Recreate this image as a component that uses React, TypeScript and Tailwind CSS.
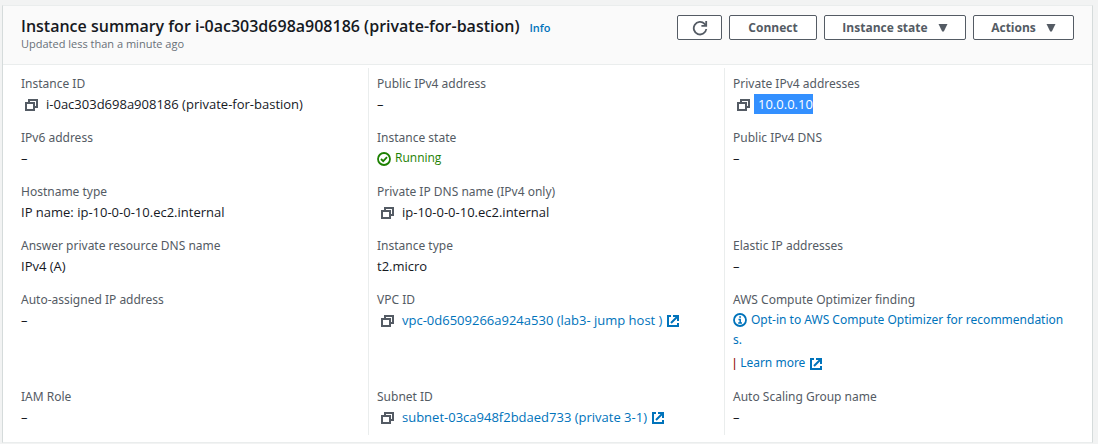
import type { ReactNode } from "react";

function CopyButton({ label }: { label: string }) {
  return (
    <button type="button" aria-label={label} className="mr-[7px] ml-1 inline-flex size-3.5 shrink-0 translate-y-px text-[#545b64]">
      <svg viewBox="0 0 14 14" className="size-3.5" fill="none" stroke="currentColor" strokeWidth="2">
        <path d="M1 5h8v7H1z" />
        <path d="M4 5V2h8v7H9" />
      </svg>
    </button>
  );
}

function ExternalIcon() {
  return (
    <svg viewBox="0 0 14 14" className="ml-1 inline-block size-3.5 shrink-0 translate-y-px" fill="none" stroke="currentColor" strokeWidth="2" aria-hidden="true">
      <path d="M5 2H2v10h10V9" />
      <path d="M7 2h5v5M12 2L5 9" />
    </svg>
  );
}

function Caret() {
  return (
    <svg viewBox="0 0 10 8" className="h-2 w-2.5" fill="currentColor" aria-hidden="true">
      <path d="M0.5 0h9L5.8 7.6H4.2z" />
    </svg>
  );
}

function Field({ label, divided = true, children = "–" }: { label: string; divided?: boolean; children?: ReactNode }) {
  return (
    <div className={divided ? "min-w-0 border-l border-[#eaeded] pt-1.5 pr-3 pb-2 pl-2" : "min-w-0 pt-1.5 pr-3 pb-2 pl-[9px]"}>
      <dt className="font-['Noto_Sans',sans-serif] text-xs leading-5 text-[#545b64]">{label}</dt>
      <dd className="text-[#16191f]">{children}</dd>
    </div>
  );
}

function CopyValue({ name, children }: { name: string; children: ReactNode }) {
  return (
    <div className="flex items-center">
      <CopyButton label={`Copy ${name}`} />
      {children}
    </div>
  );
}

const buttonClass =
  "flex h-[25px] items-center justify-center rounded-xs border border-[#545b64] bg-white text-xs font-bold text-[#545b64]";

export default function App() {
  return (
    <main className="min-h-screen bg-[#f2f3f3] pt-[5px] pr-[5px] pl-0.5 font-['Open_Sans','Noto_Sans',sans-serif] text-[13px] leading-5">
      <section className="border border-x-[#d5dbdb] border-y-[#eaeded] bg-white">
        <header className="flex items-start justify-between border-b border-[#eaeded] bg-[#fafafa] px-[18px] pt-[9px] pb-3.5">
          <div>
            <h1 className="text-base leading-[22px] font-semibold text-[#16191f]">
              Instance summary for i-0ac303d698a908186 (private-for-bastion)
              <a href="#info" className="ml-2.5 text-[11px] leading-4 font-semibold text-[#0073bb]">Info</a>
            </h1>
            <p className="text-[11px] leading-[13px] text-[#687078]">Updated less than a minute ago</p>
          </div>
          <div className="flex gap-[7px]">
            <button type="button" aria-label="Refresh" className={`${buttonClass} w-[45px]`}>
              <svg viewBox="0 0 16 16" className="size-4" fill="none" stroke="currentColor" strokeWidth="1.8">
                <path d="M14.3 9A6.3 6.3 0 1 1 12.6 3.8L14 5.3" />
                <path d="M14.2 1v4.8H9.4" />
              </svg>
            </button>
            <button type="button" className={`${buttonClass} w-22`}>Connect</button>
            <button type="button" className={`${buttonClass} w-[142px] gap-2.5`}>Instance state <Caret /></button>
            <button type="button" className={`${buttonClass} w-[101px] gap-2.5`}>Actions <Caret /></button>
          </div>
        </header>

        <dl className="grid grid-cols-3 pt-[3px] pr-3 pb-[7px] pl-[9px]">
          <Field label="Instance ID" divided={false}>
            <CopyValue name="instance ID">i-0ac303d698a908186 (private-for-bastion)</CopyValue>
          </Field>
          <Field label="Public IPv4 address" />
          <Field label="Private IPv4 addresses">
            <CopyValue name="private IPv4 address">
              <span className="-ml-1 bg-[#3390ff] pl-1 text-white">10.0.0.10</span>
            </CopyValue>
          </Field>

          <Field label="IPv6 address" divided={false} />
          <Field label="Instance state">
            <span className="flex items-center gap-1 text-xs leading-5 text-[#1d8102]">
              <svg viewBox="0 0 14 14" className="size-3.5 translate-y-px" fill="none" stroke="currentColor" strokeWidth="1.8" aria-hidden="true">
                <circle cx="7" cy="7" r="6" />
                <path d="M4 7l2.2 2.2L10 5.2" />
              </svg>
              Running
            </span>
          </Field>
          <Field label="Public IPv4 DNS" />

          <Field label="Hostname type" divided={false}>IP name: ip-10-0-0-10.ec2.internal</Field>
          <Field label="Private IP DNS name (IPv4 only)">
            <CopyValue name="private IP DNS name">ip-10-0-0-10.ec2.internal</CopyValue>
          </Field>
          <div className="border-l border-[#eaeded]" />

          <Field label="Answer private resource DNS name" divided={false}>IPv4 (A)</Field>
          <Field label="Instance type">t2.micro</Field>
          <Field label="Elastic IP addresses" />

          <Field label="Auto-assigned IP address" divided={false} />
          <Field label="VPC ID">
            <CopyValue name="VPC ID">
              <a href="#vpc" className="flex items-center text-[#0073bb]">vpc-0d6509266a924a530 (lab3- jump host ) <ExternalIcon /></a>
            </CopyValue>
          </Field>
          <Field label="AWS Compute Optimizer finding">
            <div className="font-['Noto_Sans',sans-serif] text-xs leading-5">
              <a href="#optimizer" className="block break-all text-[#0073bb]">
                <svg viewBox="0 0 14 14" className="mr-1 inline-block size-3.5 align-[-3px]" fill="none" stroke="currentColor" strokeWidth="1.8" aria-hidden="true">
                  <circle cx="7" cy="7" r="6" />
                  <path d="M5.5 6.4h1.7V10M5.2 10h3.8M6.2 4h1.8" strokeWidth="1.5" />
                </svg>
                Opt-in to AWS Compute Optimizer for recommendations.
              </a>
              <div className="mt-[3px] flex items-center gap-1">
                <span className="font-['Liberation_Sans',sans-serif] text-[#8b0000]">|</span>
                <a href="#learn-more" className="flex items-center text-[#0073bb]">Learn more <ExternalIcon /></a>
              </div>
            </div>
          </Field>

          <Field label="IAM Role" divided={false} />
          <Field label="Subnet ID">
            <CopyValue name="subnet ID">
              <a href="#subnet" className="flex items-center text-[#0073bb]">subnet-03ca948f2bdaed733 (private 3-1) <ExternalIcon /></a>
            </CopyValue>
          </Field>
          <Field label="Auto Scaling Group name" />
        </dl>
      </section>
    </main>
  );
}
